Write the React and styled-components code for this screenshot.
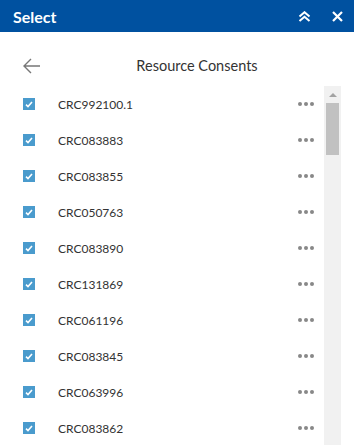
import styled, { createGlobalStyle } from "styled-components"

const GlobalStyle = createGlobalStyle`
  body {
    margin: 0;
    background: #fff;
    font-family: Lato, "Open Sans", sans-serif;
  }
`

const ids = [
  "CRC992100.1",
  "CRC083883",
  "CRC083855",
  "CRC050763",
  "CRC083890",
  "CRC131869",
  "CRC061196",
  "CRC083845",
  "CRC063996",
  "CRC083862",
]

const App = () => {
  return (
    <>
      <GlobalStyle />
      <Panel>
        <Header>
          <Title>Select</Title>
          <HeaderButtons>
            <IconButton aria-label="collapse">
              <svg width="13" height="11" viewBox="0 0 13 11" fill="none" stroke="#fff" strokeWidth="2">
                <path d="M1.5 5.5 L6.5 1.2 L11.5 5.5" />
                <path d="M1.5 10 L6.5 5.7 L11.5 10" />
              </svg>
            </IconButton>
            <IconButton aria-label="close">
              <svg width="11" height="11" viewBox="0 0 11 11" fill="none" stroke="#fff" strokeWidth="2.2">
                <path d="M1 1 L10 10 M10 1 L1 10" />
              </svg>
            </IconButton>
          </HeaderButtons>
        </Header>
        <SubHeader>
          <BackButton aria-label="back">
            <svg width="17" height="16" viewBox="0 0 17 16" fill="none" stroke="#777" strokeWidth="1.4">
              <path d="M8 1 L1 8 L8 15 M1 8 L17 8" />
            </svg>
          </BackButton>
          <SubTitle>Resource Consents</SubTitle>
        </SubHeader>
        <ListArea>
          <List>
            {ids.map((id) => (
              <Row key={id}>
                <Check>
                  <svg width="8" height="7" viewBox="0 0 8 7" fill="none" stroke="#fff" strokeWidth="1.6">
                    <path d="M1 3.6 L3 5.5 L7 1" />
                  </svg>
                </Check>
                <Label>{id}</Label>
                <More>
                  <Dot />
                  <Dot />
                  <Dot />
                </More>
              </Row>
            ))}
          </List>
          <Track>
            <Arrow />
            <Thumb />
          </Track>
        </ListArea>
      </Panel>
    </>
  )
}

export default App

const Panel = styled.div`
  width: 354px;
  height: 445px;
  display: flex;
  flex-direction: column;
  overflow: hidden;
`
const Header = styled.div`
  height: 32px;
  flex: none;
  background: #0051a0;
  display: flex;
  align-items: center;
  justify-content: space-between;
  padding: 0 11px 0 13px;
`
const Title = styled.h1`
  margin: 0;
  color: #fff;
  font-size: 16px;
  font-weight: 700;
`
const HeaderButtons = styled.div`
  display: flex;
  align-items: center;
  gap: 21px;
`
const IconButton = styled.button`
  border: 0;
  background: none;
  padding: 0;
  display: flex;
  align-items: center;
  cursor: pointer;
`
const SubHeader = styled.div`
  height: 54px;
  flex: none;
  display: flex;
  align-items: flex-start;
  padding: 25px 0 0 23px;
  box-sizing: border-box;
`
const BackButton = styled(IconButton)`
  width: 17px;
  height: 18px;
`
const SubTitle = styled.h2`
  flex: 1;
  margin: 0;
  text-align: center;
  font-size: 14.5px;
  line-height: 18px;
  font-weight: 400;
  color: #333;
`
const ListArea = styled.div`
  flex: 1;
  display: flex;
  min-height: 0;
  padding-right: 13px;
`
const List = styled.div`
  flex: 1;
  overflow: hidden;
`
const Row = styled.div`
  height: 36px;
  display: flex;
  align-items: center;
  padding: 0 10px 0 23px;
`
const Check = styled.span`
  width: 12px;
  height: 12px;
  background: #4a9bcd;
  display: flex;
  align-items: center;
  justify-content: center;
  flex: none;
`
const Label = styled.span`
  flex: 1;
  margin-left: 23px;
  font-size: 12px;
  color: #333;
`
const More = styled.span`
  display: flex;
  gap: 2px;
`
const Dot = styled.span`
  width: 4px;
  height: 4px;
  border-radius: 50%;
  background: #888;
`
const Track = styled.div`
  width: 17px;
  flex: none;
  background: #f1f1f1;
  display: flex;
  flex-direction: column;
  align-items: center;
`
const Arrow = styled.span`
  margin: 7px 0 6px;
  width: 0;
  height: 0;
  border-left: 4px solid transparent;
  border-right: 4px solid transparent;
  border-bottom: 4px solid #a3a3a3;
`
const Thumb = styled.span`
  width: 13px;
  height: 52px;
  background: #c1c1c1;
`
